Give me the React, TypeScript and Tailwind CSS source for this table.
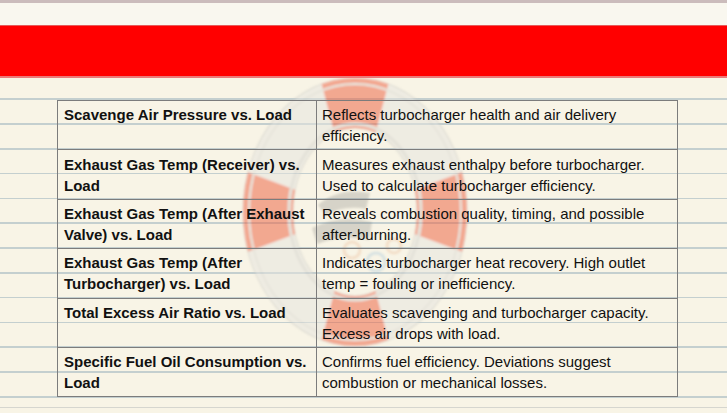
const rows = [
  {
    param: 'Scavenge Air Pressure vs. Load',
    note: 'Reflects turbocharger health and air delivery efficiency.',
  },
  {
    param: 'Exhaust Gas Temp (Receiver) vs. Load',
    note: 'Measures exhaust enthalpy before turbocharger. Used to calculate turbocharger efficiency.',
  },
  {
    param: 'Exhaust Gas Temp (After Exhaust Valve) vs. Load',
    note: 'Reveals combustion quality, timing, and possible after-burning.',
  },
  {
    param: 'Exhaust Gas Temp (After Turbocharger) vs. Load',
    note: 'Indicates turbocharger heat recovery. High outlet temp = fouling or inefficiency.',
  },
  {
    param: 'Total Excess Air Ratio vs. Load',
    note: 'Evaluates scavenging and turbocharger capacity. Excess air drops with load.',
  },
  {
    param: 'Specific Fuel Oil Consumption vs. Load',
    note: 'Confirms fuel efficiency. Deviations suggest combustion or mechanical losses.',
  },
];

function Lifebuoy() {
  const ring =
    'M243,212 a112,134 0 1,0 224,0 a112,134 0 1,0 -224,0 Z M293,212 a62,84 0 1,0 124,0 a62,84 0 1,0 -124,0 Z';
  return (
    <svg className="absolute inset-0 w-full h-full" viewBox="0 0 727 413">
      <defs>
        <clipPath id="ring">
          <path d={ring} clipRule="evenodd" />
        </clipPath>
        <filter id="soft">
          <feGaussianBlur stdDeviation="0.9" />
        </filter>
      </defs>
      <g opacity="0.5" filter="url(#soft)">
        <path d={ring} fillRule="evenodd" fill="#e6e5e0" stroke="#c6c6c1" strokeWidth="1.2" />
        <g clipPath="url(#ring)" fill="#ee5f3d">
          <polygon points="355,212 310,40 400,40" />
          <polygon points="355,212 310,384 400,384" />
          <polygon points="355,212 205,156 205,268" />
          <polygon points="355,212 505,156 505,268" />
        </g>
        <ellipse cx="355" cy="212" rx="66" ry="88" fill="none" stroke="#d2d2cd" strokeWidth="3" />
        <ellipse cx="355" cy="212" rx="106" ry="128" fill="none" stroke="#d8d8d3" strokeWidth="2" />
      </g>
      {/* faded logo in the middle */}
      <g opacity="0.2" filter="url(#soft)">
        <path d="M318,205 q20,-18 52,-12 l-4,16 q-22,-4 -40,6 z" fill="#555" />
        <path d="M312,228 q28,-14 60,-6 l-3,18 q-26,-6 -52,4 z" fill="#555" />
        <circle cx="352" cy="250" r="8" fill="none" stroke="#e08a55" strokeWidth="3" />
        <circle cx="376" cy="262" r="9" fill="none" stroke="#5a9fd4" strokeWidth="3" />
        <circle cx="394" cy="246" r="7" fill="none" stroke="#e08a55" strokeWidth="3" />
      </g>
    </svg>
  );
}

export default function App() {
  return (
    <div className="relative w-[727px] h-[413px] overflow-hidden bg-[#f8f4e6] bg-[image:repeating-linear-gradient(180deg,#c4cfcf_0px,#c4cfcf_0.8px,transparent_0.8px,transparent_24.1px,#c4cfcf_24.1px,#c4cfcf_24.8px)] font-['Liberation_Sans',Arial,sans-serif] text-[15px] text-[#111]">
      <Lifebuoy />
      <div className="relative h-[3px] bg-[#cbbcbc]" />
      <div className="relative h-[22px] bg-[#f9f7ef]" />
      <div className="relative h-[53px] bg-[#ff0000] border-t border-[#e65a5a] border-b-2 border-b-[#ec7a7a]" />

      <div className="relative pl-[57px] pt-[22px]">
        <table className="table-fixed w-[620px] border-collapse">
          <colgroup>
            <col className="w-[259px]" />
            <col className="w-[361px]" />
          </colgroup>
          <tbody>
            {rows.map((row) => (
              <tr key={row.param}>
                <td className="border border-[#7c7c7c] pl-[6px] pr-[4px] py-[3.2px] align-top font-bold leading-[21px]">
                  {row.param}
                </td>
                <td className="border border-[#7c7c7c] pl-[5px] pr-[4px] py-[3.2px] align-top leading-[21px]">
                  {row.note}
                </td>
              </tr>
            ))}
          </tbody>
        </table>
      </div>

      <div className="relative mt-[10px] h-[1px] bg-[#d6d6cf]" />
    </div>
  );
}
